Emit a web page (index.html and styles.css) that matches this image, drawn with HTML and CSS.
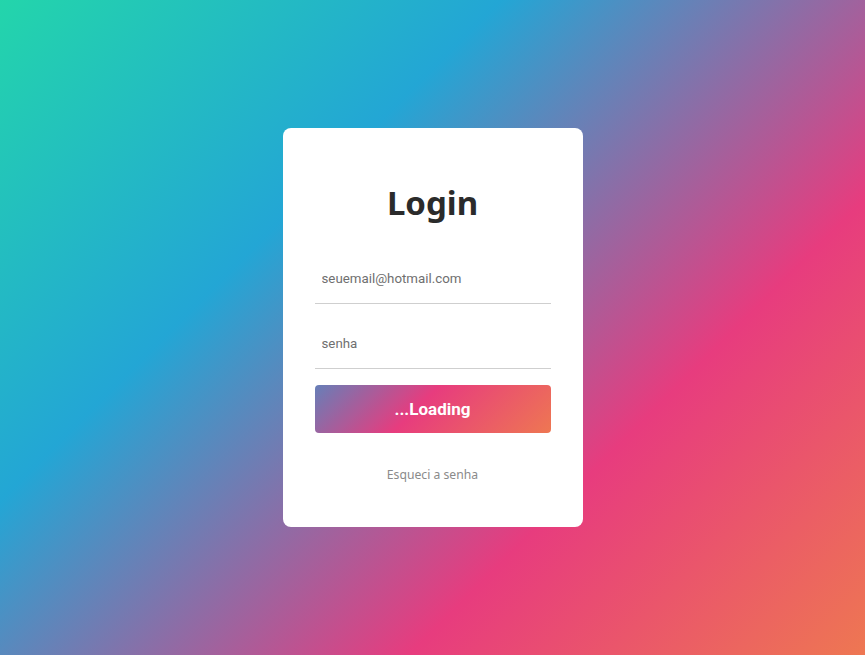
FILE: index.html
```html
<!DOCTYPE html>
<html lang="pt-BR">
<head>
<meta charset="utf-8">
<title>Login</title>
<link rel="stylesheet" href="styles.css">
</head>
<body>
<main class="page">
  <form class="card">
    <h1 class="title">Login</h1>
    <input class="field" type="email" placeholder="seuemail@hotmail.com">
    <input class="field" type="password" placeholder="senha">
    <button class="btn" type="button">...Loading</button>
    <a class="forgot" href="#">Esqueci a senha</a>
  </form>
</main>
</body>
</html>
```
FILE: styles.css
```css
* { box-sizing: border-box; }
html, body { margin: 0; height: 100%; }
body {
  background: linear-gradient(135deg, #23d5ab 0%, #23a6d5 33%, #e73c7e 70%, #ee7752 100%);
  font-family: "Noto Sans", "Open Sans", sans-serif;
}
.page {
  height: 100%;
  display: flex;
  align-items: center;
  justify-content: center;
}
.card {
  width: 300px;
  height: 399px;
  background: #fff;
  border-radius: 8px;
  padding: 50px 32px 0;
  display: flex;
  flex-direction: column;
}
.title {
  margin: 0 0 25px;
  text-align: center;
  font-size: 33px;
  font-weight: 700;
  color: #2b2b2b;
  line-height: 50px;
}
.field {
  display: block;
  width: 100%;
  height: 51px;
  border: none;
  border-bottom: 1px solid #cfcfcf;
  padding: 0 7px;
  font-family: Roboto, "Liberation Sans", sans-serif;
  font-size: 13.3px;
  color: #333;
  outline: none;
  margin-bottom: 14px;
  background: transparent;
}
.field::placeholder { color: #6f6f6f; }
.field + .field { margin-bottom: 16px; }
.btn {
  height: 48px;
  border: none;
  border-radius: 4px;
  background: linear-gradient(135deg, #667fb8 0%, #e73c7e 44%, #ee7752 100%);
  color: #fff;
  font-family: Roboto, "Liberation Sans", sans-serif;
  font-weight: 700;
  font-size: 17px;
  cursor: pointer;
}
.forgot {
  margin-top: 33px;
  text-align: center;
  font-size: 12.2px;
  color: #8a8a8a;
  text-decoration: none;
}
```
